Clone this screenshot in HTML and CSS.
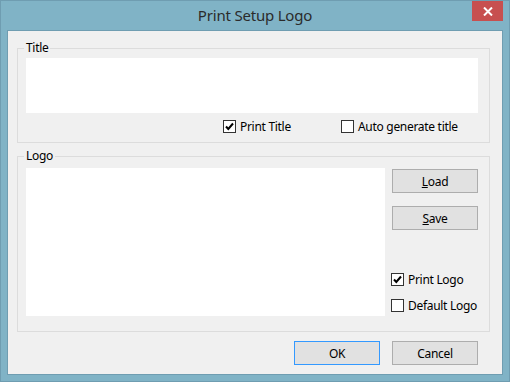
FILE: index.html
```html
<!DOCTYPE html>
<html lang="en">
<head>
    <meta charset="UTF-8">
    <title>Print Setup Logo</title>
    <link rel="stylesheet" href="styles.css">
</head>
<body>
    <div class="window">
        <div class="titlebar">
            <span></span>
            <div class="caption">Print Setup Logo</div>
            <button class="close" type="button">
                <svg width="10" height="9" viewBox="0 0 10 9">
                    <path d="M1 0.5 L9 8.5 M9 0.5 L1 8.5" stroke="#fff" stroke-width="2"/>
                </svg>
            </button>
        </div>

        <div class="client">
            <fieldset class="group group-title">
                <legend>Title</legend>
                <div class="textbox"></div>
                <div class="title-options">
                    <label class="check check-print">
                        <span class="box">
                            <svg width="11" height="11" viewBox="0 0 11 11">
                                <path d="M2 5.5 L4.3 8 L9 2.5" fill="none" stroke="#000" stroke-width="2"/>
                            </svg>
                        </span>
                        <span>Print Title</span>
                    </label>
                    <label class="check">
                        <span class="box"></span>
                        <span>Auto <u>g</u>enerate title</span>
                    </label>
                </div>
            </fieldset>

            <fieldset class="group group-logo">
                <legend>Logo</legend>
                <div class="logo-body">
                    <div class="logo-preview"></div>
                    <div class="logo-side">
                        <button class="btn" type="button"><u>L</u>oad</button>
                        <button class="btn btn-save" type="button"><u>S</u>ave</button>
                        <label class="check check-logo">
                            <span class="box">
                                <svg width="11" height="11" viewBox="0 0 11 11">
                                    <path d="M2 5.5 L4.3 8 L9 2.5" fill="none" stroke="#000" stroke-width="2"/>
                                </svg>
                            </span>
                            <span>Print Logo</span>
                        </label>
                        <label class="check check-default">
                            <span class="box"></span>
                            <span>Default Logo</span>
                        </label>
                    </div>
                </div>
            </fieldset>

            <div class="actions">
                <button class="btn btn-default" type="button">OK</button>
                <button class="btn" type="button">Cancel</button>
            </div>
        </div>
    </div>
</body>
</html>
```

FILE: styles.css
```css
body {
    margin: 0;
    font-family: 'Noto Sans', sans-serif;
    font-size: 12px;
    letter-spacing: -0.3px;
    color: #000;
}
.window {
    width: 510px;
    height: 382px;
    box-sizing: border-box;
    border: 1px solid #6f9db1;
    background-color: #80b3c6;
    padding: 0 6px 6px;
    display: flex;
    flex-direction: column;
}
.titlebar {
    height: 29px;
    display: grid;
    grid-template-columns: 1fr auto 1fr;
    align-items: start;
}
.caption {
    font-size: 15px;
    letter-spacing: -0.2px;
    line-height: 29px;
    color: #2b2b2b;
    white-space: nowrap;
}
.close {
    justify-self: end;
    width: 31px;
    height: 20px;
    padding: 0;
    border: none;
    background-color: #c75050;
    display: flex;
    align-items: center;
    justify-content: center;
}
.client {
    flex: 1;
    background-color: #f0f0f0;
    border: 1px solid #6f9db1;
    padding: 10px 12px 0 9px;
    display: flex;
    flex-direction: column;
}
.group {
    margin: 0;
    border: 1px solid #dcdcdc;
    padding: 3px 11px 9px 8px;
    min-width: 0;
}
.group legend {
    padding: 0 2px;
    margin-left: -2px;
    line-height: 14px;
}
.textbox {
    height: 55px;
    background-color: #fff;
}
.title-options {
    margin-top: 7px;
    padding-left: 197px;
    display: flex;
}
.check {
    height: 13px;
    line-height: 13px;
    display: flex;
    align-items: center;
    white-space: nowrap;
}
.check .box {
    width: 11px;
    height: 11px;
    border: 1px solid #333;
    background-color: #fff;
    margin-right: 4px;
    display: flex;
}
.check-print {
    width: 118px;
}
.group-logo {
    margin-top: 6px;
    padding-top: 5px;
    padding-bottom: 15px;
}
.logo-body {
    display: flex;
    height: 148px;
}
.logo-preview {
    width: 359px;
    background-color: #fff;
}
.logo-side {
    margin-left: 7px;
    width: 86px;
    padding-top: 1px;
    display: flex;
    flex-direction: column;
}
.btn {
    width: 86px;
    height: 24px;
    padding: 0;
    border: 1px solid #adadad;
    background-color: #e1e1e1;
    font-family: inherit;
    font-size: 12px;
    letter-spacing: inherit;
    color: #000;
}
.btn-save {
    margin-top: 13px;
}
.btn-default {
    border-color: #3399ff;
}
.check-logo {
    margin-top: 43px;
    margin-left: -1px;
}
.check-default {
    margin-top: 13px;
    margin-left: -1px;
}
.actions {
    margin: 9px 12px 0 0;
    display: flex;
    justify-content: flex-end;
    gap: 12px;
}
```
